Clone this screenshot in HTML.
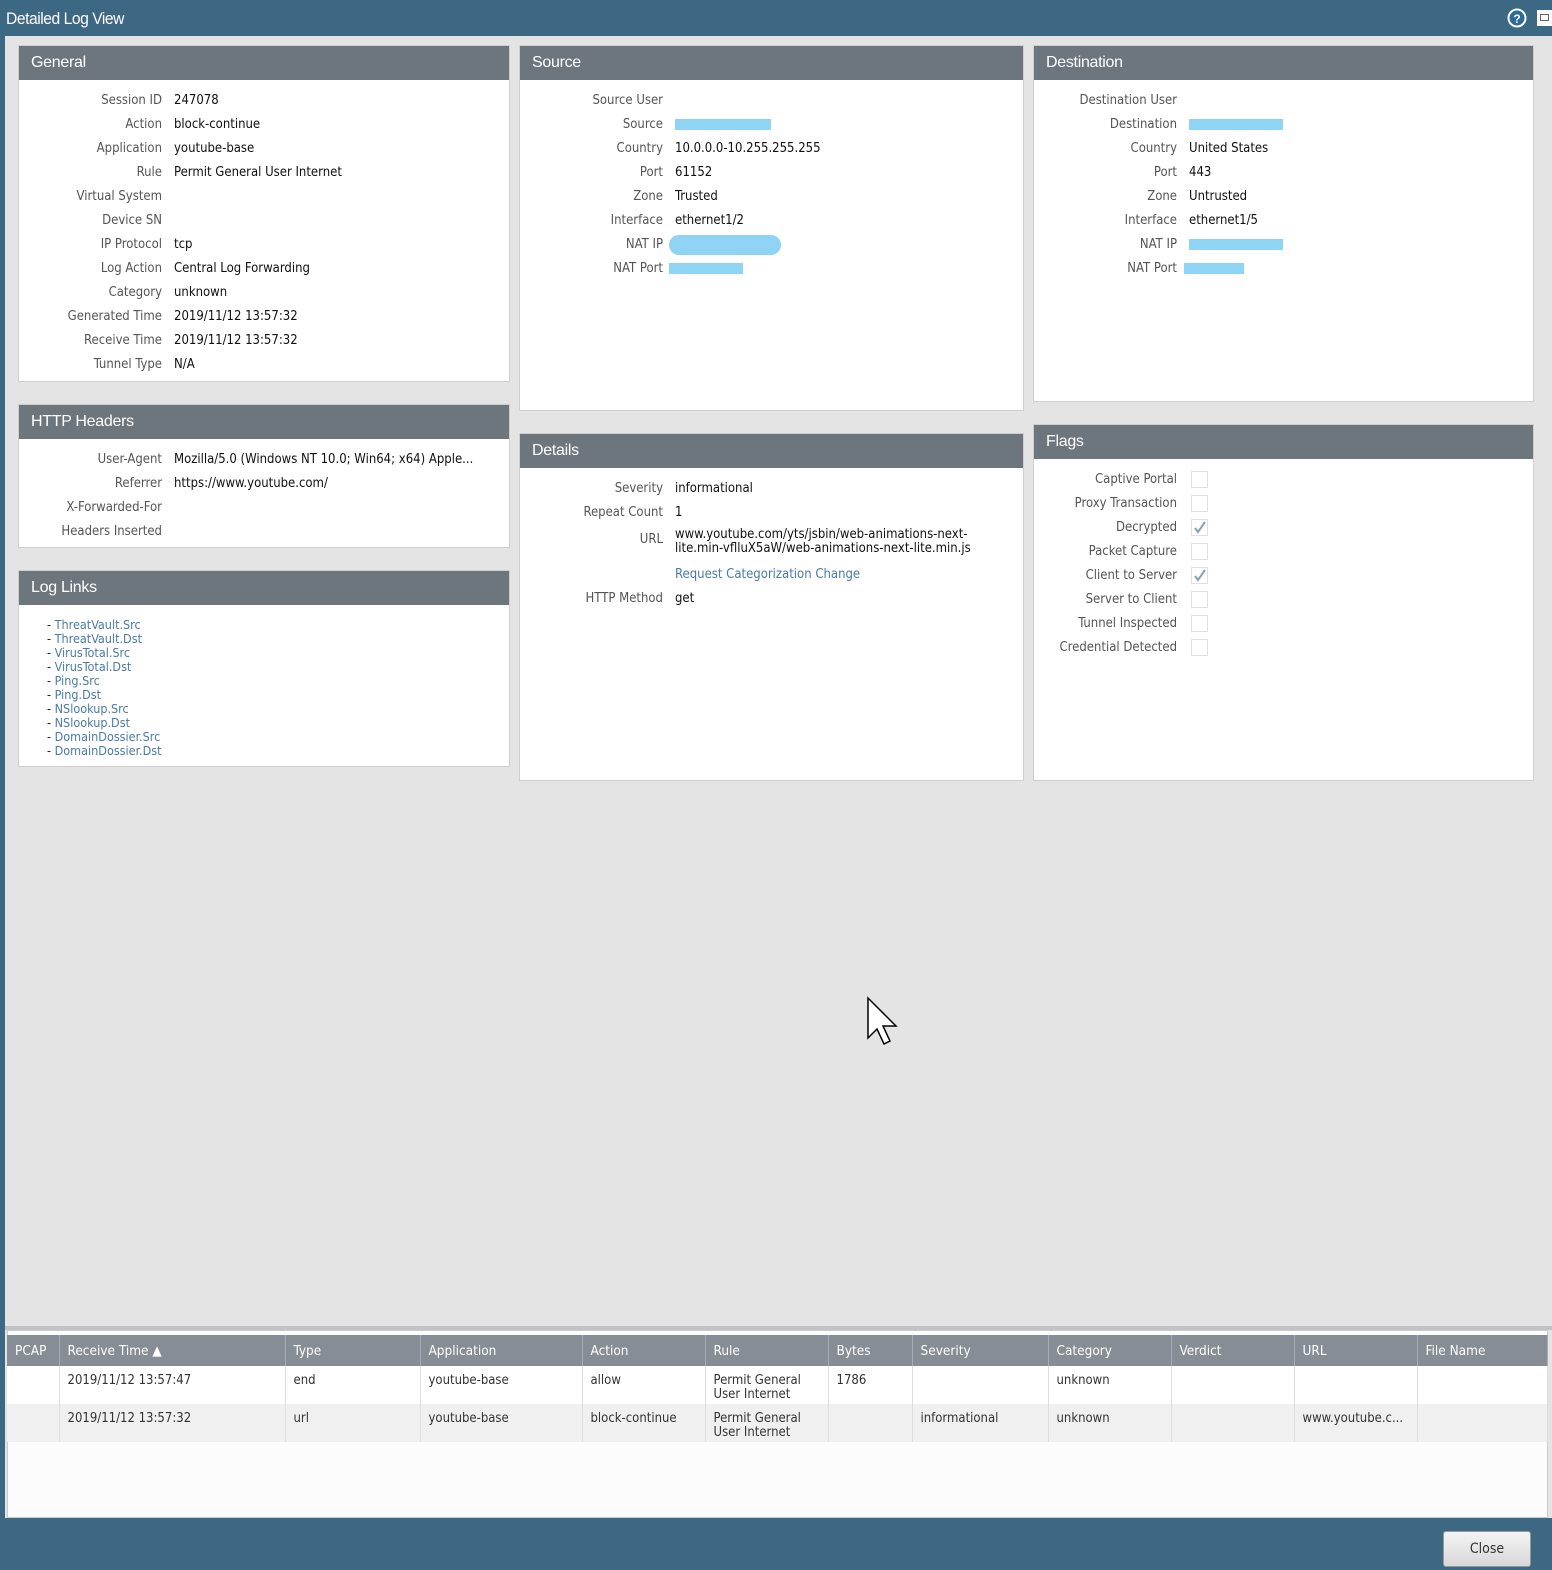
<!DOCTYPE html>
<html><head><meta charset="utf-8"><style>
*{box-sizing:border-box;margin:0;padding:0}
body{width:1552px;height:1570px;background:#3d6884;font-family:"DejaVu Sans Condensed","Liberation Sans",sans-serif;font-size:13px;color:#222;position:relative;overflow:hidden}
.title{position:absolute;left:6px;top:9px;color:#fff;font-size:17px;font-family:"Liberation Sans",sans-serif;letter-spacing:-0.5px;transform:scaleX(.92);transform-origin:left}
.main{position:absolute;left:5px;top:36px;width:1547px;height:1482px;background:#e4e4e4}
.p{position:absolute;background:#fff;border:1px solid #cfcfcf}
.h{height:34px;background:#6d757d;color:#fff;font-size:16px;padding:8px 12px;font-family:"Liberation Sans",sans-serif;letter-spacing:-0.3px}
.rows{padding-top:9px}
.r{height:24px;line-height:24px;white-space:nowrap;display:flex}
.l{width:143px;text-align:right;color:#555;flex:none}
.v{margin-left:12px;color:#111}
.blur{display:inline-block;background:#8fd3f5;height:11px;vertical-align:middle}
a{color:#4a7ba7;text-decoration:none}
.cb{width:17px;height:17px;border:1px solid #e0e0e0;margin:3px 0 0 14px;position:relative}
.links{padding:13px 0 0 28px;font-size:12.5px;line-height:14px}
table{border-collapse:collapse;position:absolute;left:7px;top:1335px;width:1541px;font-size:13px}
th{background:#868d94;color:#fff;font-weight:normal;text-align:left;height:31px;padding:0 8px;border-right:1px solid #aab;font-size:13.5px}
td{vertical-align:top;padding:8px 8px 0;height:38px;line-height:14px;border-right:1px solid #ddd;color:#333}
tr.a td{background:#fff}tr.b td{background:#f0f0f0}
</style></head><body>
<div class="title">Detailed Log View</div>
<svg style="position:absolute;left:1507px;top:8px" width="20" height="20"><circle cx="10" cy="10" r="8.5" fill="#2c6a9a" stroke="#fff" stroke-width="2"/><text x="10" y="15" fill="#fff" font-size="12" font-weight="bold" text-anchor="middle" font-family="Liberation Sans">?</text></svg>
<div style="position:absolute;left:1537px;top:10px;width:15px;height:16px;background:#fff"><div style="position:absolute;left:3px;top:4px;width:9px;height:7px;border:1px solid #666"></div></div>
<div class="main"></div>

<div class="p" style="left:18px;top:45px;width:492px;height:337px"><div class="h">General</div><div class="rows">
<div class="r"><span class="l">Session ID</span><span class="v">247078</span></div>
<div class="r"><span class="l">Action</span><span class="v">block-continue</span></div>
<div class="r"><span class="l">Application</span><span class="v">youtube-base</span></div>
<div class="r"><span class="l">Rule</span><span class="v">Permit General User Internet</span></div>
<div class="r"><span class="l">Virtual System</span><span class="v"></span></div>
<div class="r"><span class="l">Device SN</span><span class="v"></span></div>
<div class="r"><span class="l">IP Protocol</span><span class="v">tcp</span></div>
<div class="r"><span class="l">Log Action</span><span class="v">Central Log Forwarding</span></div>
<div class="r"><span class="l">Category</span><span class="v">unknown</span></div>
<div class="r"><span class="l">Generated Time</span><span class="v">2019/11/12 13:57:32</span></div>
<div class="r"><span class="l">Receive Time</span><span class="v">2019/11/12 13:57:32</span></div>
<div class="r"><span class="l">Tunnel Type</span><span class="v">N/A</span></div>
</div></div>

<div class="p" style="left:519px;top:45px;width:505px;height:366px"><div class="h">Source</div><div class="rows">
<div class="r"><span class="l">Source User</span><span class="v"></span></div>
<div class="r"><span class="l">Source</span><span class="v"><span class="blur" style="width:96px"></span></span></div>
<div class="r"><span class="l">Country</span><span class="v">10.0.0.0-10.255.255.255</span></div>
<div class="r"><span class="l">Port</span><span class="v">61152</span></div>
<div class="r"><span class="l">Zone</span><span class="v">Trusted</span></div>
<div class="r"><span class="l">Interface</span><span class="v">ethernet1/2</span></div>
<div class="r"><span class="l">NAT IP</span><span class="v"><span class="blur" style="width:112px;height:20px;border-radius:10px;margin-left:-6px"></span></span></div>
<div class="r"><span class="l">NAT Port</span><span class="v"><span class="blur" style="width:74px;margin-left:-6px"></span></span></div>
</div></div>

<div class="p" style="left:1033px;top:45px;width:501px;height:357px"><div class="h">Destination</div><div class="rows">
<div class="r"><span class="l">Destination User</span><span class="v"></span></div>
<div class="r"><span class="l">Destination</span><span class="v"><span class="blur" style="width:94px"></span></span></div>
<div class="r"><span class="l">Country</span><span class="v">United States</span></div>
<div class="r"><span class="l">Port</span><span class="v">443</span></div>
<div class="r"><span class="l">Zone</span><span class="v">Untrusted</span></div>
<div class="r"><span class="l">Interface</span><span class="v">ethernet1/5</span></div>
<div class="r"><span class="l">NAT IP</span><span class="v"><span class="blur" style="width:94px"></span></span></div>
<div class="r"><span class="l">NAT Port</span><span class="v"><span class="blur" style="width:60px;margin-left:-5px"></span></span></div>
</div></div>

<div class="p" style="left:18px;top:404px;width:492px;height:144px"><div class="h">HTTP Headers</div><div class="rows">
<div class="r"><span class="l">User-Agent</span><span class="v">Mozilla/5.0 (Windows NT 10.0; Win64; x64) Apple...</span></div>
<div class="r"><span class="l">Referrer</span><span class="v">https://www.youtube.com/</span></div>
<div class="r"><span class="l">X-Forwarded-For</span><span class="v"></span></div>
<div class="r"><span class="l">Headers Inserted</span><span class="v"></span></div>
</div></div>

<div class="p" style="left:18px;top:570px;width:492px;height:197px"><div class="h">Log Links</div><div class="links">
<div>- <a>ThreatVault.Src</a></div><div>- <a>ThreatVault.Dst</a></div><div>- <a>VirusTotal.Src</a></div><div>- <a>VirusTotal.Dst</a></div><div>- <a>Ping.Src</a></div><div>- <a>Ping.Dst</a></div><div>- <a>NSlookup.Src</a></div><div>- <a>NSlookup.Dst</a></div><div>- <a>DomainDossier.Src</a></div><div>- <a>DomainDossier.Dst</a></div>
</div></div>

<div class="p" style="left:519px;top:433px;width:505px;height:348px"><div class="h">Details</div><div class="rows">
<div class="r"><span class="l">Severity</span><span class="v">informational</span></div>
<div class="r"><span class="l">Repeat Count</span><span class="v">1</span></div>
<div class="r" style="height:38px;line-height:14px"><span class="l" style="padding-top:8px">URL</span><span class="v" style="padding-top:3px">www.youtube.com/yts/jsbin/web-animations-next-<br>lite.min-vflluX5aW/web-animations-next-lite.min.js</span></div>
<div class="r"><span class="l"></span><span class="v"><a>Request Categorization Change</a></span></div>
<div class="r"><span class="l">HTTP Method</span><span class="v">get</span></div>
</div></div>

<div class="p" style="left:1033px;top:424px;width:501px;height:357px"><div class="h">Flags</div><div class="rows">
<div class="r"><span class="l">Captive Portal</span><span class="cb"></span></div>
<div class="r"><span class="l">Proxy Transaction</span><span class="cb"></span></div>
<div class="r"><span class="l">Decrypted</span><span class="cb"><svg width="15" height="15" style="position:absolute;left:0;top:0"><path d="M3 8l3 4 7-10" stroke="#8aa0b4" stroke-width="2" fill="none"/></svg></span></div>
<div class="r"><span class="l">Packet Capture</span><span class="cb"></span></div>
<div class="r"><span class="l">Client to Server</span><span class="cb"><svg width="15" height="15" style="position:absolute;left:0;top:0"><path d="M3 8l3 4 7-10" stroke="#8aa0b4" stroke-width="2" fill="none"/></svg></span></div>
<div class="r"><span class="l">Server to Client</span><span class="cb"></span></div>
<div class="r"><span class="l">Tunnel Inspected</span><span class="cb"></span></div>
<div class="r"><span class="l">Credential Detected</span><span class="cb"></span></div>
</div></div>

<svg style="position:absolute;left:866px;top:996px" width="36" height="50"><path d="M2 2v40l9-9 7 15 6-3-7-15h13z" fill="#fff" stroke="#000" stroke-width="1.5"/></svg>

<div style="position:absolute;left:5px;top:1326px;width:1547px;height:4px;background:#bfc3c7"></div>
<div style="position:absolute;left:7px;top:1330px;width:1541px;height:188px;background:#fcfcfc;border:1px solid #ccc"></div>
<table>
<tr><th style="width:52px">PCAP</th><th style="width:226px">Receive Time ▲</th><th style="width:135px">Type</th><th style="width:162px">Application</th><th style="width:123px">Action</th><th style="width:123px">Rule</th><th style="width:84px">Bytes</th><th style="width:136px">Severity</th><th style="width:123px">Category</th><th style="width:123px">Verdict</th><th style="width:123px">URL</th><th>File Name</th></tr>
<tr class="a"><td></td><td>2019/11/12 13:57:47</td><td>end</td><td>youtube-base</td><td>allow</td><td>Permit General<br>User Internet</td><td>1786</td><td></td><td>unknown</td><td></td><td></td><td></td></tr>
<tr class="b"><td></td><td>2019/11/12 13:57:32</td><td>url</td><td>youtube-base</td><td>block-continue</td><td>Permit General<br>User Internet</td><td></td><td>informational</td><td>unknown</td><td></td><td>www.youtube.c...</td><td></td></tr>
</table>
<div style="position:absolute;left:1443px;top:1531px;width:88px;height:36px;background:linear-gradient(#f4f4f4,#d8d8d8);border:1px solid #999;border-radius:3px;text-align:center;line-height:34px;font-size:14px;color:#333">Close</div>
</body></html>
